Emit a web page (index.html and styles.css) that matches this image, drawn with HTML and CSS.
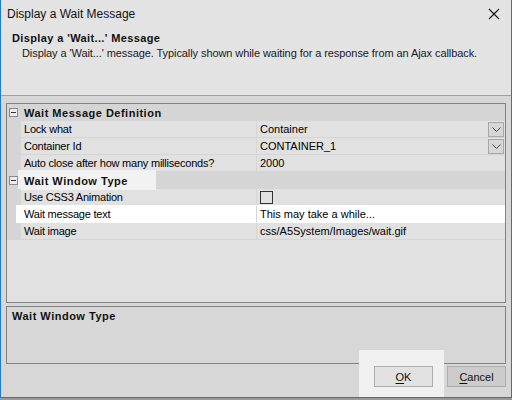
FILE: index.html
```html
<!DOCTYPE html>
<html>
<head>
<meta charset="utf-8">
<link rel="stylesheet" href="styles.css">
</head>
<body>
<div class="window">
  <div class="titlebar">
    <span class="title">Display a Wait Message</span>
    <svg class="close" width="12" height="12" viewBox="0 0 12 12"><path d="M1 1 L11 11 M11 1 L1 11" stroke="#111" stroke-width="1.1" fill="none"/></svg>
  </div>
  <div class="header">
    <div class="h-title">Display a 'Wait...' Message</div>
    <div class="h-desc">Display a 'Wait...' message. Typically shown while waiting for a response from an Ajax callback.</div>
  </div>
  <div class="body">
    <div class="grid">
      <div class="cat">
        <span class="toggle"></span><span class="cat-label">Wait Message Definition</span>
      </div>
      <div class="row">
        <div class="gutter"></div><div class="label">Lock what</div>
        <div class="value"><span>Container</span><span class="dd"><svg width="9" height="5" viewBox="0 0 9 5"><path d="M0.5 0.5 L4.5 4.5 L8.5 0.5" stroke="#444" fill="none"/></svg></span></div>
      </div>
      <div class="row">
        <div class="gutter"></div><div class="label">Container Id</div>
        <div class="value"><span>CONTAINER_1</span><span class="dd"><svg width="9" height="5" viewBox="0 0 9 5"><path d="M0.5 0.5 L4.5 4.5 L8.5 0.5" stroke="#444" fill="none"/></svg></span></div>
      </div>
      <div class="row">
        <div class="gutter"></div><div class="label">Auto close after how many milliseconds?</div>
        <div class="value"><span>2000</span></div>
      </div>
      <div class="cat hover">
        <span class="toggle"></span><span class="cat-label">Wait Window Type</span>
      </div>
      <div class="row">
        <div class="gutter"></div><div class="label">Use CSS3 Animation</div>
        <div class="value"><span class="check"></span></div>
      </div>
      <div class="row selected">
        <div class="gutter"></div><div class="label">Wait message text</div>
        <div class="value"><span>This may take a while...</span></div>
      </div>
      <div class="row">
        <div class="gutter"></div><div class="label">Wait image</div>
        <div class="value"><span>css/A5System/Images/wait.gif</span></div>
      </div>
    </div>
    <div class="desc">Wait Window Type</div>
    <div class="footer">
      <button class="btn ok"><u>O</u>K</button>
      <button class="btn cancel"><u>C</u>ancel</button>
    </div>
    <div class="ok-glow"></div>
  </div>
</div>
</body>
</html>
```

FILE: styles.css
```css
html, body {
  margin: 0;
  padding: 0;
  width: 512px;
  height: 400px;
  background: #9a9a9a;
  overflow: hidden;
}

.window {
  box-sizing: border-box;
  width: 512px;
  height: 398px;
  border: 1px solid #1c7bd4;
  border-top: none;
  background: #d7d7d7;
  display: flex;
  flex-direction: column;
  font-family: "Liberation Sans", Arial, sans-serif;
  color: #000;
}

.titlebar {
  height: 28px;
  flex: none;
  display: flex;
  align-items: center;
  justify-content: space-between;
  background: #e3e3e3;
  padding: 0 11px 0 6px;
}

.title {
  font-size: 12px;
  color: #111;
}

.close {
  display: block;
}

.header {
  flex: none;
  background: #e3e3e3;
  border-bottom: 1px solid #a0a0a0;
  box-sizing: border-box;
  height: 68px;
  padding: 3px 0 0 11px;
}

.h-title {
  font-size: 11px;
  font-weight: bold;
  line-height: 15px;
  letter-spacing: 0.38px;
  color: #111;
}

.h-desc {
  font-size: 11px;
  line-height: 15px;
  padding-left: 10px;
  letter-spacing: -0.08px;
  color: #1a1a1a;
}

.body {
  position: relative;
  flex: 1;
  display: flex;
  flex-direction: column;
  padding: 7px 5px 0 5px;
}

.grid {
  height: 200px;
  box-sizing: border-box;
  border: 1px solid #828282;
  background: #e1e1e1;
  font-size: 11px;
  flex: none;
}

.cat {
  position: relative;
  height: 17px;
  background: #d5d5d5;
  display: flex;
  align-items: center;
}

.cat.hover::before {
  content: "";
  position: absolute;
  left: 11px;
  top: -2px;
  width: 138px;
  height: 20px;
  background: #f2f2f2;
}

.toggle {
  position: relative;
  box-sizing: border-box;
  width: 9px;
  height: 9px;
  margin-left: 2px;
  border: 1px solid #8a8a8a;
  background: #ececec;
  z-index: 1;
}

.toggle::after {
  content: "";
  position: absolute;
  left: 1px;
  right: 1px;
  top: 3px;
  height: 1px;
  background: #333;
}

.cat-label {
  position: relative;
  z-index: 1;
  margin-left: 6px;
  font-weight: bold;
  letter-spacing: 0.5px;
  color: #111;
}

.row {
  position: relative;
  height: 17px;
  display: flex;
  box-sizing: border-box;
  border-bottom: 1px solid #d5d5d5;
}

.row.selected::before {
  content: "";
  position: absolute;
  left: 9px;
  right: 0;
  top: -1px;
  bottom: -1px;
  background: #ffffff;
}

.gutter {
  width: 14px;
  flex: none;
  background: #d5d5d5;
}

.label {
  position: relative;
  z-index: 1;
  width: 236px;
  flex: none;
  box-sizing: border-box;
  padding-left: 3px;
  line-height: 16px;
  letter-spacing: -0.22px;
  border-right: 1px solid #d5d5d5;
  white-space: nowrap;
}

.value {
  position: relative;
  z-index: 1;
  flex: 1;
  display: flex;
  align-items: center;
  justify-content: space-between;
  padding-left: 3px;
  line-height: 16px;
  white-space: nowrap;
}

.dd {
  width: 16px;
  height: 15px;
  box-sizing: border-box;
  border: 1px solid #a8a8a8;
  background: #d6d6d6;
  margin-right: 1px;
  display: flex;
  align-items: center;
  justify-content: center;
}

.dd svg {
  display: block;
}

.check {
  width: 13px;
  height: 13px;
  box-sizing: border-box;
  border: 1px solid #333;
  margin-top: 1px;
}

.desc {
  margin-top: 3px;
  height: 58px;
  box-sizing: border-box;
  border: 1px solid #828282;
  background: #d7d7d7;
  font-size: 11px;
  font-weight: bold;
  letter-spacing: 0.5px;
  padding: 3px 0 0 5px;
  color: #111;
  flex: none;
}

.footer {
  display: flex;
  justify-content: flex-end;
  gap: 14px;
  margin-top: 2px;
}

.btn {
  position: relative;
  z-index: 1;
  width: 59px;
  height: 21px;
  box-sizing: border-box;
  border: 1px solid #adadad;
  font-family: "Liberation Sans", Arial, sans-serif;
  font-size: 11px;
  color: #111;
  padding: 0;
  background: #e1e1e1;
}

.btn.cancel {
  background: #cccccc;
}

.btn u {
  text-decoration-thickness: 1px;
  text-underline-offset: 2px;
}

.ok-glow {
  position: absolute;
  left: 358px;
  top: 254px;
  width: 85px;
  bottom: 0;
  background: #f0f0f0;
}
```
